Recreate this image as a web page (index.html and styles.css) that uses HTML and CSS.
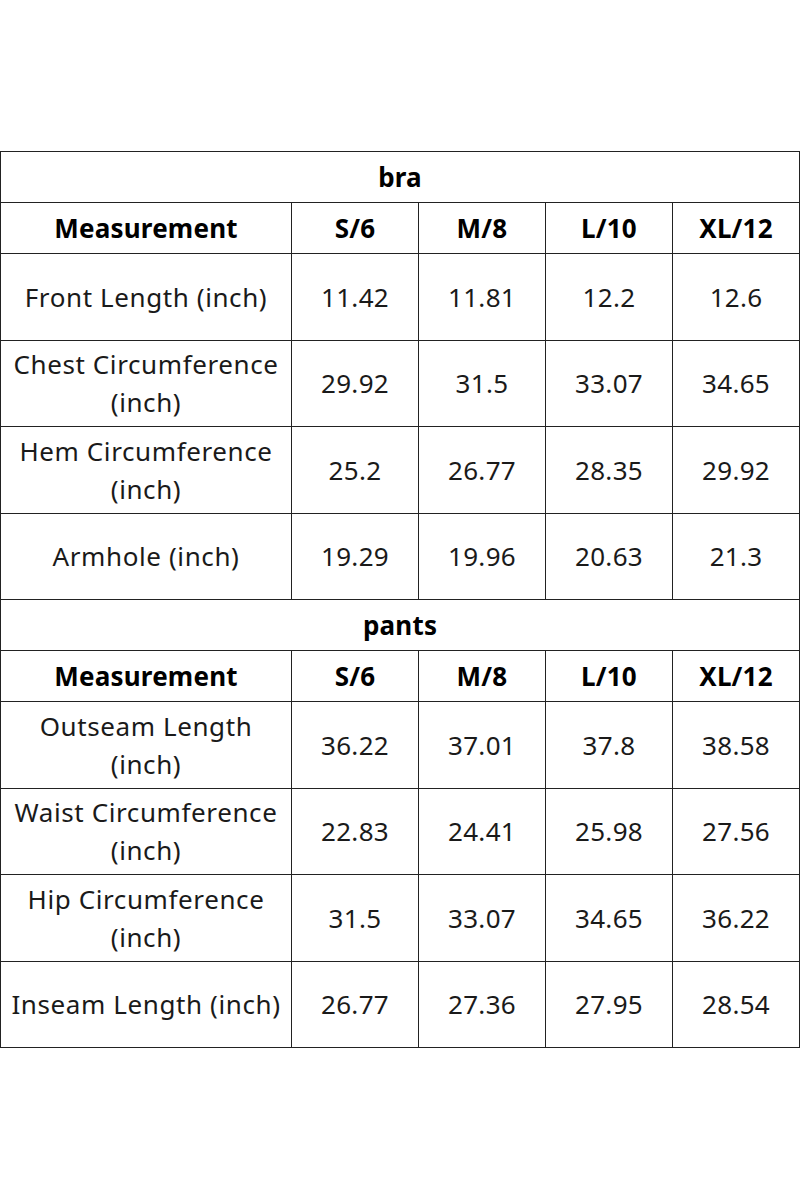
FILE: index.html
```html
<!DOCTYPE html>
<html>
<head>
<meta charset="utf-8">
<link rel="stylesheet" href="styles.css">
</head>
<body>
<table class="size-table">
<colgroup>
<col class="c-name"><col class="c-size"><col class="c-size"><col class="c-size"><col class="c-size">
</colgroup>
<tbody>
<tr class="title"><td colspan="5">bra</td></tr>
<tr class="head"><td>Measurement</td><td>S/6</td><td>M/8</td><td>L/10</td><td>XL/12</td></tr>
<tr class="row"><td>Front Length (inch)</td><td>11.42</td><td>11.81</td><td>12.2</td><td>12.6</td></tr>
<tr class="row"><td>Chest Circumference<br>(inch)</td><td>29.92</td><td>31.5</td><td>33.07</td><td>34.65</td></tr>
<tr class="row"><td>Hem Circumference<br>(inch)</td><td>25.2</td><td>26.77</td><td>28.35</td><td>29.92</td></tr>
<tr class="row"><td>Armhole (inch)</td><td>19.29</td><td>19.96</td><td>20.63</td><td>21.3</td></tr>
<tr class="title"><td colspan="5">pants</td></tr>
<tr class="head"><td>Measurement</td><td>S/6</td><td>M/8</td><td>L/10</td><td>XL/12</td></tr>
<tr class="row"><td>Outseam Length<br>(inch)</td><td>36.22</td><td>37.01</td><td>37.8</td><td>38.58</td></tr>
<tr class="row"><td>Waist Circumference<br>(inch)</td><td>22.83</td><td>24.41</td><td>25.98</td><td>27.56</td></tr>
<tr class="row"><td>Hip Circumference<br>(inch)</td><td>31.5</td><td>33.07</td><td>34.65</td><td>36.22</td></tr>
<tr class="row"><td>Inseam Length (inch)</td><td>26.77</td><td>27.36</td><td>27.95</td><td>28.54</td></tr>
</tbody>
</table>
</body>
</html>
```
FILE: styles.css
```css
html, body {
  margin: 0;
  padding: 0;
  background: #fff;
}
body {
  padding-top: 151px;
  font-family: "Noto Sans", "Open Sans", sans-serif;
  color: #1a1a1a;
}
.size-table {
  width: 800px;
  border-collapse: collapse;
  table-layout: fixed;
}
.c-name { width: 291px; }
.c-size { width: 127px; }
.size-table td {
  border: 1.5px solid #222;
  text-align: center;
  vertical-align: middle;
  padding: 0 2px;
  font-size: 26px;
  line-height: 38px;
  white-space: nowrap;
}
.title td, .head td {
  height: 50px;
  font-weight: bold;
  color: #000;
  letter-spacing: 0.2px;
}
.row td {
  height: 85.5px;
  letter-spacing: 0.6px;
}
.row td + td {
  letter-spacing: 0.3px;
}
```
